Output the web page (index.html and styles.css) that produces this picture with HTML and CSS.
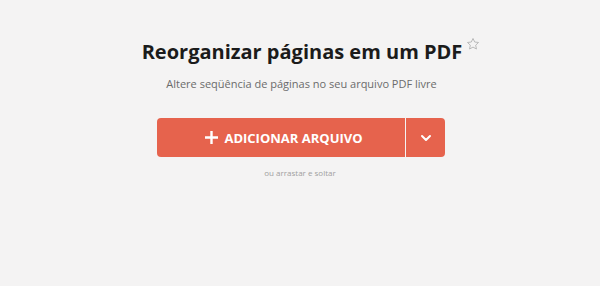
FILE: index.html
```html
<!DOCTYPE html>
<html lang="pt-BR">
<head>
    <meta charset="UTF-8">
    <meta name="viewport" content="width=device-width, initial-scale=1.0">
    <title>Reorganizar páginas em um PDF</title>
    <link rel="stylesheet" href="styles.css">
</head>
<body>
    <div class="tool-header">
        <h1 class="tool-title">
            Reorganizar páginas em um PDF
            <span class="fav-star">
                <svg width="14" height="14" viewBox="0 0 24 24" fill="none" stroke="#b5b5b5" stroke-width="1.6" stroke-linejoin="round">
                    <path d="M12 2.5l2.9 6.1 6.6.8-4.9 4.6 1.3 6.6L12 17.3l-5.9 3.3 1.3-6.6-4.9-4.6 6.6-.8z"/>
                </svg>
            </span>
        </h1>
        <p class="tool-subtitle">Altere seqüência de páginas no seu arquivo PDF livre</p>

        <div class="upload-group">
            <button class="upload-btn">
                <svg width="13" height="13" viewBox="0 0 13 13">
                    <path d="M6.5 0v13M0 6.5h13" stroke="#fff" stroke-width="2.4"/>
                </svg>
                ADICIONAR ARQUIVO
            </button>
            <button class="upload-more">
                <svg width="12" height="8" viewBox="0 0 12 8" fill="none" stroke="#fff" stroke-width="2" stroke-linecap="round" stroke-linejoin="round">
                    <path d="M2 2l4 4 4-4"/>
                </svg>
            </button>
        </div>
        <div class="drop-hint">ou arrastar e soltar</div>
    </div>
</body>
</html>
```

FILE: styles.css
```css
:root {
    --accent: #e6634d;
    --bg: #f4f3f3;
    --text: #1b1b1b;
    --muted: #6b6b6b;
    --radius: 4px;
}

body {
    margin: 0;
    background: var(--bg);
    font-family: "Open Sans", "Noto Sans", sans-serif;
    min-height: 100vh;
}

.tool-header {
    display: flex;
    flex-direction: column;
    align-items: center;
    padding-top: 38px;
}

.tool-title {
    position: relative;
    margin: 0 0 0 4px;
    font-size: 20px;
    line-height: 28px;
    font-weight: 700;
    color: var(--text);
}

.fav-star {
    position: absolute;
    right: -18px;
    top: -1px;
    line-height: 0;
}

.tool-subtitle {
    margin: 10px 0 0 3px;
    font-size: 11px;
    line-height: 16px;
    color: var(--muted);
}

.upload-group {
    display: flex;
    margin-top: 26px;
    margin-left: 2px;
}

.upload-btn,
.upload-more {
    height: 39px;
    border: none;
    background: var(--accent);
    color: white;
    font-family: inherit;
    cursor: pointer;
    display: flex;
    align-items: center;
    justify-content: center;
}

.upload-btn {
    width: 248px;
    gap: 6px;
    font-size: 13px;
    font-weight: 700;
    border-radius: var(--radius) 0 0 var(--radius);
    padding: 0 0 0 6px;
}

.upload-more {
    width: 39px;
    margin-left: 1px;
    border-radius: 0 var(--radius) var(--radius) 0;
    padding: 0;
}

.drop-hint {
    margin-top: 10px;
    font-size: 8px;
    color: #a0a0a0;
}
```
